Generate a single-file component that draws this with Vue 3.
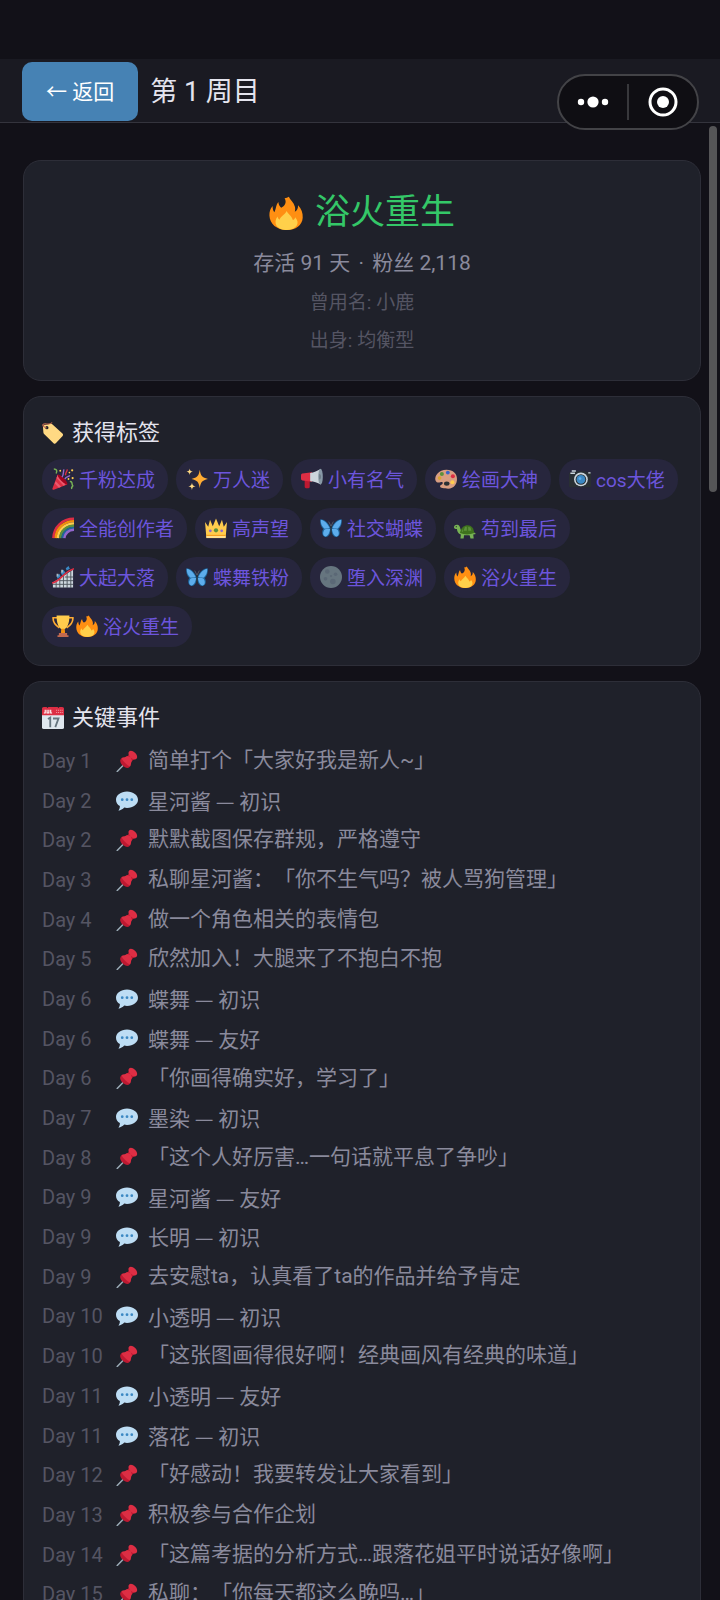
<template>
  <div class="page">
    <svg class="sprite" aria-hidden="true">
      <symbol id="fire" viewBox="0 0 24 24">
        <path fill="#ff8f12" d="M14 .5c.8 2 3.600 4.200 4.300 7 .3 1.300.2 2.600-.1 3.600 1.600-.6 2.400-2.400 2.300-4.600 2.400 2.600 3.500 5.500 3.300 8.800C23.500 20.600 18.800 24 12.500 24 5.500 24 .5 19.800.3 13.800c-.1-2.700.6-5 2.300-6.800-.1 1.900.3 3.300 1.200 4.400C5.200 9 4.700 6.500 6.600 4.300c.2 1.700.8 3 2 4C11 7 12.800 4.500 11 1.500c1.200-.1 2.200-.3 3-1z" />
        <path fill="#ffd04a" d="M12.500 10.500c1 2.500 3.800 3.500 4.300 6.500 1-.3 1.500-1 1.700-2 1.800 2 2.200 4.200 1 6-1.300 2-4.200 3-7 3s-5.900-1-7.200-3c-1.200-2-.8-4.500.7-6.500.2 1 .7 1.800 1.500 2.200.5-2.500 3.800-3.500 5-6.200z" />
      </symbol>
      <symbol id="tag" viewBox="0 0 24 24">
        <path fill="#ffd983" d="M2 3.500 9.500 2c.7-.1 1.400.1 2 .6l10.800 10c.8.8.9 1.800.2 2.700L15.300 23c-.8.9-1.900.9-2.700.1L2.300 13c-.5-.5-.8-1.100-.8-1.800L1 5z" />
        <circle cx="5.300" cy="6.200" r="1.800" fill="#1f2129" />
        <path fill="none" stroke="#c1694f" stroke-width="1.200" d="M5 6.500C1 5.500-.3 3 2 2.200 5 1.500 9 3.500 11 .5" />
      </symbol>
      <symbol id="calendar" viewBox="0 0 24 24">
        <path fill="#dfe7ee" d="M0 8h24v14a2 2 0 0 1-2 2H2a2 2 0 0 1-2-2z" />
        <path fill="#dd2e44" d="M0 2C0 .9.700 0 2 0h3l1 1 1-1h10l1 1 1-1h3c1.300 0 2 .9 2 2v7H0z" />
        <path fill="none" stroke="#fff" stroke-width="1.200" d="M3.500 3v3.500H2M5.500 3v3.500h2V3M9.500 3v3.500H11" />
        <path stroke="#f4a3ad" stroke-width="1.200" stroke-dasharray="1 1" d="M15.500 3.500h7M15.500 6h7" />
        <path fill="none" stroke="#66757f" stroke-width="2" d="M6.500 13 9 11.500V22M12 12.500h6L14.500 22" />
      </symbol>
      <symbol id="pin" viewBox="0 0 24 24">
        <path stroke="#99aab5" stroke-width="1.600" stroke-linecap="round" d="M9 15.500 1.300 23.500" />
        <path fill="#be1931" d="M12 7.500 15.500 3l5.800 5.600-4.500 3.900z" />
        <path fill="#dd2e44" d="M14.300 1.700c1.500-1.500 4.200-.7 6.400 1.400 2.300 2.200 3.200 5 1.700 6.500s-4.300.6-6.500-1.500c-2.200-2.200-3.100-4.900-1.600-6.400z" />
        <path fill="#be1931" d="M5.500 9.500c1.700-1.800 5-1.300 7.700 1.300s3.300 6 1.600 7.800c-1.800 1.700-5 .9-7.600-1.600-2.600-2.600-3.500-5.700-1.700-7.500z" />
        <path fill="#dd2e44" d="M6 8.800c2.300-1 4.500-.8 6-2.200l4 1 1.500 4.500c-1.500 1.700-.6 3.600-2.200 6-1.200-.5-3-1.500-5-3.600C8 12.300 6.500 10.500 6 8.800z" />
      </symbol>
      <symbol id="chat" viewBox="0 0 24 24">
        <path fill="#bdddf4" d="M12 1.500c6.800 0 12 4 12 9s-5.200 9-12 9c-1 0-2-.1-3-.3-1.700 1.800-4 3.200-6.300 3.300 1-1.500 1.600-3.200 1.500-5C1.600 16 0 13.400 0 10.500c0-5 5.200-9 12-9z" />
        <g fill="#3b88c3">
          <circle cx="6.800" cy="10.500" r="1.500" />
          <circle cx="12" cy="10.500" r="1.500" />
          <circle cx="17.200" cy="10.500" r="1.500" />
        </g>
      </symbol>
      <symbol id="party" viewBox="0 0 24 24">
        <path fill="#dd2e44" d="M6 7.500C8 7 17 15 16.500 18L2 23.700c-1 .3-1.800-.4-1.500-1.400z" />
        <path fill="#ea596e" d="m5 11 1-3.500 9 9-2 3zM3 17l1-2.500 6 6-2.500 1z" />
        <ellipse cx="11.500" cy="12.500" rx="2" ry="7.300" fill="#a0041e" transform="rotate(-45 11.500 12.500)" />
        <path fill="none" stroke="#9266cc" stroke-width="1.500" d="M11 10c2-3 1-5 2-8.500M14 12c2-3 4-2 5.500-4" />
        <path fill="none" stroke="#77b255" stroke-width="1.600" d="M2 1c3 0 4 2 2.500 5M19.500 15c3-1 2 3 3 4s-2 1-1 4" />
        <path fill="none" stroke="#dd2e44" stroke-width="1.500" d="M15 8c-1-3 2-4 1.500-6.500" />
        <g fill="#ffcc4d">
          <circle cx="9" cy="3" r="1" />
          <circle cx="22" cy="2.500" r="1.200" />
          <circle cx="19" cy="5" r=".9" />
          <circle cx="22.500" cy="11" r="1.200" />
          <circle cx="18" cy="12" r="1" />
        </g>
      </symbol>
      <symbol id="sparkles" viewBox="0 0 24 24">
        <path fill="#ffac33" d="M15 2c1 6.500 2.500 8.500 9 10-6.500 1.500-8 3.500-9 10-1-6.500-2.500-8.500-9-10 6.500-1.500 8-3.500 9-10z" />
        <path fill="#ffd983" d="M4 .5c.4 2.500 1 3.100 3.500 3.500C5 4.400 4.400 5 4 7.500 3.600 5 3 4.400.5 4 3 3.600 3.600 3 4 .5zM6.500 16c.5 2.700 1.200 3.500 4 4-2.800.5-3.500 1.300-4 4-.5-2.700-1.200-3.500-4-4 2.800-.5 3.500-1.300 4-4z" />
      </symbol>
      <symbol id="megaphone" viewBox="0 0 24 24">
        <path fill="#be1931" d="M4 13h5.500v7.500c0 .8-.5 1.500-1.300 1.500H5.500C4.700 22 4 21.300 4 20.500z" />
        <path fill="#dd2e44" d="M1.500 6 12 4.500V15L1.500 13.500C.5 13.300 0 12.500 0 11.500V8c0-1 .5-1.800 1.500-2z" />
        <path fill="#ccd6dd" d="M10 5.500C14 5 18 3 21.500 1v17c-3.500-2-7.500-3.300-11.500-3.500z" />
        <ellipse cx="21.300" cy="9.500" rx="2.500" ry="8.600" fill="#8899a6" />
        <path fill="#66757f" d="M20 6.500c2.200 0 2.200 6 0 6z" />
      </symbol>
      <symbol id="palette" viewBox="0 0 24 24">
        <path fill="#d99e82" d="M12.500 2C20 2 24 6.500 24 12s-3.500 10.500-9.500 10.500C10 22.500 5.500 22 5.500 20c0-1.800 3.500-2 3-4C8 14 4.500 17 2 15.500-.5 14-.3 9.500 2.500 6.200 5 3.300 8.500 2 12.500 2z" />
        <ellipse cx="12.800" cy="17" rx="3" ry="2.400" fill="#292f33" />
        <circle cx="5" cy="11" r="2" fill="#d9a52e" />
        <circle cx="7.500" cy="6.500" r="2.200" fill="#5c913b" />
        <circle cx="14" cy="5" r="2.100" fill="#3864c8" />
        <circle cx="19.500" cy="9" r="2.200" fill="#dd2e44" />
        <circle cx="19" cy="15.500" r="2.200" fill="#ffcc4d" />
      </symbol>
      <symbol id="camera" viewBox="0 0 24 24">
        <path fill="#292f33" d="M1.500 5h3l1-1.500h13L20 5h2.500C23.500 5 24 5.700 24 6.500v13c0 .9-.5 1.500-1.500 1.500h-21C.6 21 0 20.400 0 19.500v-13C0 5.700.6 5 1.500 5z" />
        <path fill="#ccd6dd" d="M3 2.500h4.500V4H3zM1.500 5h5v1.500h-5zM21 4.500h2.500V6H21z" />
        <circle cx="13" cy="12.500" r="7.500" fill="#ccd6dd" />
        <circle cx="13" cy="12.500" r="5.800" fill="#292f33" />
        <circle cx="13" cy="12.500" r="4.800" fill="#3b88c3" />
        <circle cx="12" cy="11.500" r="1.500" fill="#5dadec" />
      </symbol>
      <symbol id="rainbow" viewBox="0 0 24 24">
        <g fill="none" stroke-width="2.700">
          <path stroke="#dd2e44" d="M1.500 23C2 11 11 2 24 2" />
          <path stroke="#f4900c" d="M4 23C4.500 12.500 13 4.500 24 4.500" />
          <path stroke="#ffcc4d" d="M6.500 23C7 14 14.500 7 24 7" />
          <path stroke="#5c913b" d="M9 23c.5-7.500 6.500-13.500 15-13.500" />
          <path stroke="#226699" d="M11.500 23C12 17 17 12 24 12" />
          <path stroke="#9266cc" d="M13.500 23c.5-5 4.500-9 10.500-9" />
        </g>
      </symbol>
      <symbol id="crown" viewBox="0 0 24 24">
        <path fill="#ffcc4d" d="M1.500 22.500 0 5.500l3.500 5L5.500 3l3 7L12 1.500l3.500 8.500 3-7 2 7.500 3.500-5-1.500 17z" />
        <path fill="#ffe08f" d="M1.500 20.500h21v2.500h-21z" />
        <path fill="#f4900c" d="M1.500 19.500h21v1h-21z" />
        <circle cx="12" cy="14.500" r="2.300" fill="#5c913b" />
        <circle cx="5.800" cy="15" r="1.500" fill="#9266cc" />
        <circle cx="18.200" cy="15" r="1.500" fill="#9266cc" />
      </symbol>
      <symbol id="butterfly" viewBox="0 0 24 24">
        <path fill="#1c6399" d="M11.500 12C9 6 4.500 2.500.5 2.500-.5 6 1 11 3.500 13c-2 3-1.500 7 1.500 8.500 3.500 1.500 6-2 7-7 1 5 3.500 8.500 7 7 3-1.500 3.500-5.500 1.500-8.500C23 11 24.500 6 23.500 2.500c-4 0-8.500 3.500-11 9.500z" />
        <path fill="#5dadec" d="M10.500 12C8.500 7.500 5 3.700.8 3 .5 7 2.200 11 5 12.700zM13.500 12c2-4.500 5.500-8.300 9.700-9 .3 4-1.400 8-4.200 9.700zM5 13.500c1.500-.8 4.500-.8 6-.3-.5 4.500-2.800 8.500-5.300 8-2.700-1-3-4.700-.7-7.700zM19 13.500c-1.500-.8-4.500-.8-6-.3.5 4.500 2.800 8.500 5.300 8 2.700-1 3-4.700.7-7.700z" />
        <path stroke="#292f33" stroke-width="1.300" stroke-linecap="round" d="M12 10v9" />
        <path fill="none" stroke="#66757f" stroke-width=".7" d="M12 10 9.500 5M12 10l2.500-5" />
      </symbol>
      <symbol id="turtle" viewBox="0 0 24 24">
        <g transform="translate(0 2)">
          <path fill="#77b255" d="M0 8.500C.5 6 4.500 5.500 6 8c1 1.800.8 4.500 3 6h12l3 2.500-3 .5.500 4.500h-3.500L17 18h-6l-.5 3.500H7L7.500 17C4 16 3.500 13.500 3.200 11.200 1.500 11.300-.3 10.500 0 8.500z" />
          <path fill="#3e721d" d="M6.500 15.500C7.500 9.500 11 7 15 7s6.500 3 7 8.500c-5 2-10.500 2-15.500 0z" />
          <path fill="#5c913b" d="M12 8.500h2V13h-3.500zM15.500 8.500l2.500 1L19 13h-3.500zM9.500 11 8.500 14H10z" />
          <circle cx="2.500" cy="8.500" r=".7" fill="#292f33" />
        </g>
      </symbol>
      <symbol id="coaster" viewBox="0 0 24 24">
        <path fill="#ccd6dd" d="M1 18 23 4v19.500H1z" />
        <path fill="none" stroke="#4b545b" stroke-width="1" d="M4.500 15v9M8.500 13v11M12.500 10v14M16.500 7v17M20.500 5v19M1 20h22M8 16h15M14 12h9" />
        <path fill="none" stroke="#dd2e44" stroke-width="1.700" d="M0 18.500c5-.5 8-4 12-8s7-6 12-7.500" />
        <path fill="#3b88c3" d="m5 11 3-2.500 1.500 3L6 14zM9.500 7l3-3 2 3-3.500 3zM15 2.500 18 0l1.500 3L16 5z" />
        <path fill="#aab8c2" d="M5 8.500h2v3H5zM10 4h2v3h-2z" />
      </symbol>
      <symbol id="moon" viewBox="0 0 24 24">
        <circle cx="12" cy="12" r="12" fill="#66757f" />
        <g fill="#5b6876">
          <circle cx="8" cy="6" r="2.500" />
          <circle cx="17" cy="9" r="2" />
          <circle cx="6" cy="14" r="2" />
          <circle cx="14" cy="17" r="3" />
          <circle cx="12" cy="11" r="1.200" />
        </g>
      </symbol>
      <symbol id="trophy" viewBox="0 0 24 24">
        <path fill="none" stroke="#ffac33" stroke-width="1.800" d="M6 3H1.200c-.3 5 2 8 6.800 11M18 3h4.800c.3 5-2 8-6.800 11" />
        <path fill="#ffcc4d" d="M5 .5h14C19 9 17 13.500 13.500 15.500L14 20h-4l.5-4.500C7 13.500 5 9 5 .5z" />
        <path fill="#f4900c" d="M10.500 15h3l.8 5H9.700z" />
        <path fill="#c1694f" d="M7.500 19.500h9V22H18v2H6v-2h1.500z" />
      </symbol>
    </svg>

    <header class="topbar">
      <button class="back" type="button">← 返回</button>
      <h1 class="topbar-title">第 1 周目</h1>
    </header>

    <div class="capsule">
      <button class="capsule-btn" type="button" aria-label="更多">
        <svg width="32" height="12" viewBox="0 0 32 12" fill="#fff">
          <circle cx="4" cy="6" r="3.200" />
          <circle cx="16" cy="6" r="5.600" />
          <circle cx="28" cy="6" r="3.200" />
        </svg>
      </button>
      <span class="capsule-line"></span>
      <button class="capsule-btn" type="button" aria-label="关闭">
        <svg width="30" height="30" viewBox="0 0 30 30">
          <circle cx="15" cy="15" r="13" fill="none" stroke="#fff" stroke-width="3" />
          <circle cx="15" cy="15" r="6" fill="#fff" />
        </svg>
      </button>
    </div>
    <div class="scroll-thumb"></div>

    <main class="content">
      <section class="card summary">
        <h2 class="ending">
          <svg class="ending-icon"><use href="#fire" /></svg>
          <span>浴火重生</span>
        </h2>
        <p class="stats">存活 91 天 <span class="dot">·</span> 粉丝 2,118</p>
        <p class="meta">曾用名: 小鹿</p>
        <p class="meta">出身: 均衡型</p>
      </section>

      <section class="card">
        <h3 class="card-title">
          <svg class="icon"><use href="#tag" /></svg>
          获得标签
        </h3>
        <ul class="tags">
          <li v-for="(tag, i) in tags" :key="i" class="tag">
            <span class="tag-icons">
              <svg v-for="icon in tag.icons" :key="icon" class="icon"><use :href="`#${icon}`" /></svg>
            </span>
            {{ tag.name }}
          </li>
        </ul>
      </section>

      <section class="card">
        <h3 class="card-title">
          <svg class="icon"><use href="#calendar" /></svg>
          关键事件
        </h3>
        <ul class="events">
          <li v-for="(event, i) in events" :key="i" class="event">
            <span class="day">Day {{ event.day }}</span>
            <svg class="icon"><use :href="`#${event.icon}`" /></svg>
            <span :class="{ relation: event.icon === 'chat' }">{{ event.text }}</span>
          </li>
        </ul>
      </section>
    </main>
  </div>
</template>

<script setup>
const tags = [
  { icons: ['party'], name: '千粉达成' },
  { icons: ['sparkles'], name: '万人迷' },
  { icons: ['megaphone'], name: '小有名气' },
  { icons: ['palette'], name: '绘画大神' },
  { icons: ['camera'], name: 'cos大佬' },
  { icons: ['rainbow'], name: '全能创作者' },
  { icons: ['crown'], name: '高声望' },
  { icons: ['butterfly'], name: '社交蝴蝶' },
  { icons: ['turtle'], name: '苟到最后' },
  { icons: ['coaster'], name: '大起大落' },
  { icons: ['butterfly'], name: '蝶舞铁粉' },
  { icons: ['moon'], name: '堕入深渊' },
  { icons: ['fire'], name: '浴火重生' },
  { icons: ['trophy', 'fire'], name: '浴火重生' },
];

// pin = story choice, chat = relationship change
const events = [
  { day: 1, icon: 'pin', text: '简单打个「大家好我是新人~」' },
  { day: 2, icon: 'chat', text: '星河酱 — 初识' },
  { day: 2, icon: 'pin', text: '默默截图保存群规，严格遵守' },
  { day: 3, icon: 'pin', text: '私聊星河酱：「你不生气吗？被人骂狗管理」' },
  { day: 4, icon: 'pin', text: '做一个角色相关的表情包' },
  { day: 5, icon: 'pin', text: '欣然加入！大腿来了不抱白不抱' },
  { day: 6, icon: 'chat', text: '蝶舞 — 初识' },
  { day: 6, icon: 'chat', text: '蝶舞 — 友好' },
  { day: 6, icon: 'pin', text: '「你画得确实好，学习了」' },
  { day: 7, icon: 'chat', text: '墨染 — 初识' },
  { day: 8, icon: 'pin', text: '「这个人好厉害…一句话就平息了争吵」' },
  { day: 9, icon: 'chat', text: '星河酱 — 友好' },
  { day: 9, icon: 'chat', text: '长明 — 初识' },
  { day: 9, icon: 'pin', text: '去安慰ta，认真看了ta的作品并给予肯定' },
  { day: 10, icon: 'chat', text: '小透明 — 初识' },
  { day: 10, icon: 'pin', text: '「这张图画得很好啊！经典画风有经典的味道」' },
  { day: 11, icon: 'chat', text: '小透明 — 友好' },
  { day: 11, icon: 'chat', text: '落花 — 初识' },
  { day: 12, icon: 'pin', text: '「好感动！我要转发让大家看到」' },
  { day: 13, icon: 'pin', text: '积极参与合作企划' },
  { day: 14, icon: 'pin', text: '「这篇考据的分析方式…跟落花姐平时说话好像啊」' },
  { day: 15, icon: 'pin', text: '私聊：「你每天都这么晚吗…」' },
];
</script>

<style>
body {
  margin: 0;
  background: #121118;
}
</style>

<style scoped>
.page {
  position: relative;
  display: flex;
  flex-direction: column;
  height: 100vh;
  box-sizing: border-box;
  padding-top: 59px;
  overflow: hidden;
  background: #121118;
  color: #e4e4ee;
  font-family: Roboto, "Noto Sans CJK SC", sans-serif;
  text-spacing-trim: space-all;
}

.sprite {
  position: absolute;
  width: 0;
  height: 0;
}

h1,
h2,
h3,
p,
ul {
  margin: 0;
  padding: 0;
  font-weight: 400;
  list-style: none;
}

button {
  border: 0;
  font-family: inherit;
}

.topbar {
  flex: none;
  display: flex;
  align-items: center;
  gap: 12px;
  padding: 3px 22px 1px;
  background: #1a1a22;
  border-bottom: 1px solid #34343d;
}

.back {
  height: 59px;
  padding: 0 24px 4px;
  border-radius: 10px;
  background: #4682b4;
  color: #fff;
  font-size: 21px;
}

.topbar-title {
  font-size: 27px;
  line-height: 40px;
}

/* Mini program menu, floats over the header */
.capsule {
  position: absolute;
  top: 74px;
  right: 21px;
  z-index: 2;
  display: flex;
  align-items: center;
  width: 142px;
  height: 56px;
  box-sizing: border-box;
  border: 2px solid #434347;
  border-radius: 28px;
  background: #0f0e13;
}

.capsule-btn {
  flex: 1;
  display: flex;
  align-items: center;
  justify-content: center;
  height: 100%;
  padding: 0;
  background: none;
}

.capsule-line {
  width: 2px;
  height: 36px;
  background: #38383c;
}

.scroll-thumb {
  position: absolute;
  top: 126px;
  right: 3px;
  width: 8px;
  height: 366px;
  border-radius: 4px;
  background: #555557;
}

.content {
  flex: 1;
  min-height: 0;
  display: flex;
  flex-direction: column;
  gap: 15px;
  padding: 37px 19px 0 23px;
}

.card {
  flex: none;
  padding: 18px;
  border: 1px solid #2d2e38;
  border-radius: 18px;
  background: #1f212a;
}

.summary {
  padding: 26px 18px 23px;
  text-align: center;
}

.ending {
  display: flex;
  align-items: center;
  justify-content: center;
  gap: 12px;
  color: #34c768;
  font-size: 35px;
  line-height: 52px;
}

.ending-icon {
  width: 34px;
  height: 34px;
}

.stats {
  margin-top: 6px;
  color: #8a8a9c;
  font-size: 21px;
  line-height: 36px;
}

.dot {
  margin: 0 3px;
}

.meta {
  margin-top: 6px;
  color: #555563;
  font-size: 19px;
  line-height: 32px;
}

.card-title {
  display: flex;
  align-items: center;
  gap: 8px;
  font-size: 22px;
  line-height: 36px;
}

.icon {
  flex: none;
  width: 22px;
  height: 22px;
}

.tags {
  display: flex;
  flex-wrap: wrap;
  gap: 8px;
  margin-top: 8px;
}

.tag {
  display: flex;
  align-items: center;
  gap: 5px;
  height: 41px;
  box-sizing: border-box;
  padding: 0 13px 2px 10px;
  border-radius: 20px;
  background: #27263d;
  color: #6c55dc;
  font-size: 19px;
}

.tag-icons {
  display: flex;
  gap: 2px;
}

.events {
  margin-top: 5px;
}

.event {
  display: grid;
  grid-template-columns: 66px 24px 1fr;
  align-items: center;
  gap: 8px;
  padding: 2px 0;
  color: #8a8a9c;
  font-size: 21px;
  line-height: 1.7;
}

/* full-width dash between name and level */
.relation {
  font-family: "Noto Sans CJK SC", sans-serif;
}

.day {
  color: #555563;
  font-size: 20px;
}
</style>
